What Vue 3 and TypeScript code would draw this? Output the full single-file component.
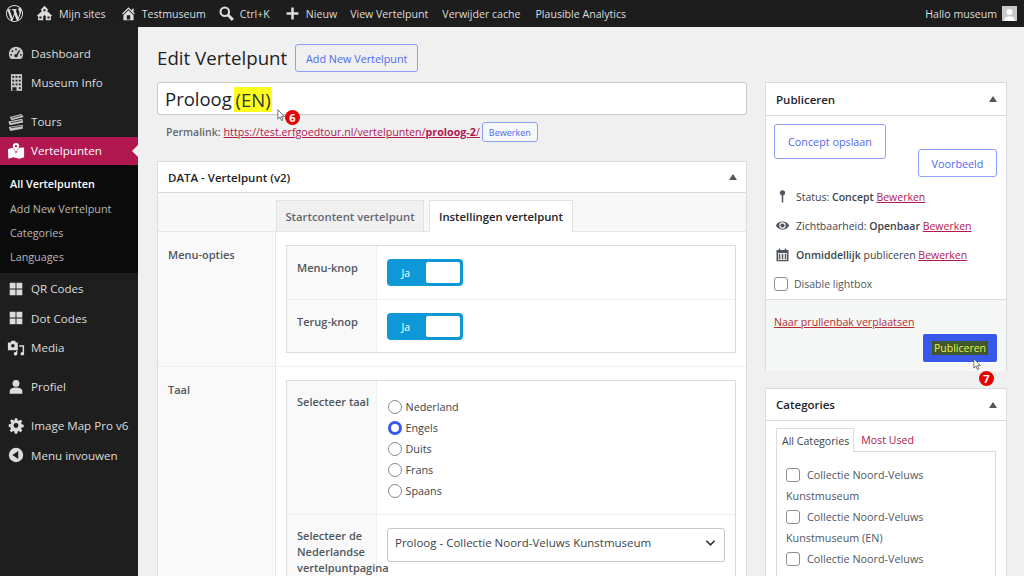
<script setup lang="ts">
const subItems = [
  { label: 'All Vertelpunten', now: true },
  { label: 'Add New Vertelpunt', now: false },
  { label: 'Categories', now: false },
  { label: 'Languages', now: false },
]
const languages = [
  { label: 'Nederland', on: false },
  { label: 'Engels', on: true },
  { label: 'Duits', on: false },
  { label: 'Frans', on: false },
  { label: 'Spaans', on: false },
]
const cats = ['Collectie Noord-Veluws', 'Collectie Noord-Veluws', 'Collectie Noord-Veluws']
const catSub = ['Kunstmuseum', 'Kunstmuseum (EN)', '']
</script>

<template>
  <div class="page">
    <header class="bar">
      <svg class="bi wp" viewBox="0 0 20 20"><path fill="#dcdcdc" d="M20 10c0-5.510-4.490-10-10-10C4.480 0 0 4.490 0 10c0 5.520 4.480 10 10 10 5.510 0 10-4.480 10-10zM7.780 15.370L4.370 6.220c.55-.02 1.170-.08 1.170-.08.5-.06.44-1.130-.06-1.110 0 0-1.450.11-2.370.11-.18 0-.37 0-.58-.01C4.120 2.690 6.880 1.120 10 1.120c2.330 0 4.450.87 6.050 2.340-.68-.11-1.650.39-1.650 1.580 0 .74.45 1.360.9 2.100.35.61.55 1.360.55 2.460 0 1.490-1.400 5-1.400 5l-3.030-8.370c.54-.02.82-.17.82-.17.5-.05.44-1.250-.06-1.220 0 0-1.440.12-2.380.12-.87 0-2.330-.12-2.330-.12-.5-.03-.56 1.200-.06 1.220l.92.08 1.260 3.410zM17.410 10c.24-.64.74-1.870.43-4.250.7 1.290 1.050 2.710 1.050 4.250 0 3.290-1.730 6.240-4.400 7.780.97-2.590 1.940-5.200 2.920-7.780zM6.100 18.090C3.120 16.640 1.110 13.530 1.110 10c0-1.300.23-2.480.72-3.590C3.250 10.300 4.670 14.200 6.100 18.090zm4.030-6.630l2.580 6.980c-.86.29-1.740.45-2.710.45-.79 0-1.570-.11-2.290-.33.81-2.380 1.620-4.740 2.420-7.100z"/></svg>
      <span class="bitem m-sites"><svg class="bi" viewBox="0 0 20 20"><path fill="#dcdcdc" fill-rule="evenodd" d="M10 1 5.500 5.500 7 7l-6 5.500.8.800.7-.6V18h6v-4.800l1.500-1.400 1.500 1.400V18h6v-5.300l.7.6.8-.8L13 7l1.500-1.500zM8.800 5h2.400v2.300H8.800zM4 13.500h2.500V16H4zm9.500 0H16V16h-2.500z"/></svg><span class="bt6">Mijn sites</span></span>
      <span class="bitem m-home"><svg class="bi" viewBox="0 0 20 20"><path fill="#dcdcdc" d="M16 8.500l1.530 1.530-1.060 1.060L10 4.620l-6.470 6.470-1.060-1.060L10 2.500l4 4v-2h2v4zm-6-2.460l6 5.990V18H4v-5.970zM12 17v-5H8v5h4z"/></svg>Testmuseum</span>
      <span class="bitem m-search"><svg class="bi" viewBox="0 0 20 20"><circle cx="8" cy="8" r="5" fill="none" stroke="#dcdcdc" stroke-width="2.500"/><path d="m11.500 11.500 6 6" stroke="#dcdcdc" stroke-width="3.400"/></svg>Ctrl+K</span>
      <span class="bitem m-plus"><svg class="bi" viewBox="0 0 20 20"><path d="M8.500 3h3v5.500H17v3h-5.500V17h-3v-5.500H3v-3h5.500z" fill="#dcdcdc"/></svg>Nieuw</span>
      <span class="bitem m-view">View Vertelpunt</span>
      <span class="bitem m-cache">Verwijder cache</span>
      <span class="bitem m-plaus">Plausible Analytics</span>
      <span class="bitem hello">Hallo museum<span class="avatar"><svg viewBox="0 0 15 15"><rect width="15" height="15" fill="#c9c9c9"/><circle cx="7.500" cy="6" r="3" fill="#fff"/><path d="M2 15c.5-4 3-4.500 5.500-4.500S12.500 11 13 15z" fill="#fff"/></svg></span></span>
    </header>

    <div class="body">
      <nav class="side">
        <a class="mi"><svg class="si" viewBox="0 0 20 20"><path d="M10 3a8 8 0 0 0-8 8c0 2.200.9 4.200 2.300 5.600h11.400A8 8 0 0 0 18 11a8 8 0 0 0-8-8z" fill="#c8c8c8"/><circle cx="6" cy="8" r="1" fill="#1e1e1e"/><circle cx="10" cy="6" r="1" fill="#1e1e1e"/><circle cx="4.500" cy="12" r="1" fill="#1e1e1e"/><circle cx="15.500" cy="12" r="1" fill="#1e1e1e"/><path d="m14 7-3 5" stroke="#1e1e1e" stroke-width="1.500"/><circle cx="10" cy="13" r="1.800" fill="#1e1e1e"/></svg>Dashboard</a>
        <a class="mi"><svg class="si tall" viewBox="0 0 14 20"><path d="M1 1h12v18H1z" fill="#c8c8c8"/><path d="M2.500 3h2v2h-2zm3.500 0h2v2H6zm3.500 0h2v2h-2zM2.500 7h2v2h-2zM6 7h2v2H6zm3.500 0h2v2h-2zM2.500 11h2v2h-2zM6 11h2v2H6zm3.500 0h2v2h-2zM2.500 15H7v4H2.500zm7 0h2v2h-2z" fill="#1e1e1e"/></svg>Museum Info</a>
        <a class="mi gap"><svg class="si" viewBox="0 0 20 20"><path d="M3 4.500 16 1l2.500 3.500L5 8zM1.500 9.500 17 6.500l1 4-15 3zM2 15.500 17.500 13v4.500L3.500 20z" fill="#c8c8c8"/><path d="m5 5.700 11-3M4 10.800l12-2.400M4.500 16.400l12-1.800" stroke="#1e1e1e" stroke-width=".8"/></svg>Tours</a>
        <a class="mi act"><svg class="si" viewBox="0 0 20 20"><path d="M1 8 6 6.500l1.500 1L10 13l2.500-5.500 1.500-1 5-.5v11l-5 1.500-7-1.500-5.500 1.500z" fill="#fff"/><path d="M10 1a3.500 3.500 0 0 0-3.500 3.500c0 2 3.500 6.500 3.500 6.500s3.500-4.500 3.500-6.500A3.500 3.500 0 0 0 10 1zm0 2.200a1.300 1.300 0 1 1 0 2.600 1.300 1.300 0 0 1 0-2.600z" fill="#fff"/></svg>Vertelpunten<i class="arrow"></i></a>
        <div class="sub">
          <a v-for="s in subItems" :key="s.label" :class="{ now: s.now }">{{ s.label }}</a>
        </div>
        <a class="mi"><svg class="si" viewBox="0 0 20 20"><path d="M3 3h6.500v6.500H3zm7.500 0H17v6.500h-6.500zM3 10.500h6.500V17H3zm7.500 0H17V17h-6.500z" fill="#dcdcdc"/></svg>QR Codes</a>
        <a class="mi"><svg class="si" viewBox="0 0 20 20"><path d="M3 3h6.500v6.500H3zm7.500 0H17v6.500h-6.500zM3 10.500h6.500V17H3zm7.500 0H17V17h-6.500z" fill="#dcdcdc"/></svg>Dot Codes</a>
        <a class="mi"><svg class="si" viewBox="0 0 20 20"><path d="M1 4h3l1-2h4l1 2h2v8.500H1z" fill="#dcdcdc"/><circle cx="6.500" cy="7.500" r="2" fill="#1e1e1e"/><path d="M13.500 7h5.500v9.500a2 2 0 1 1-1.600-2V8.700h-3.900z" fill="#dcdcdc"/><circle cx="9.500" cy="16.500" r="2" fill="#dcdcdc"/><path d="M10 16.500V13h1.500v3.500z" fill="#dcdcdc"/></svg>Media</a>
        <a class="mi gap"><svg class="si" viewBox="0 0 20 20"><circle cx="10" cy="6" r="3.800" fill="#dcdcdc"/><path d="M3 17.500v-3c0-2.500 3-4 7-4s7 1.500 7 4v3z" fill="#dcdcdc"/></svg>Profiel</a>
        <a class="mi gap"><svg class="si" viewBox="0 0 20 20"><path d="m8.500 1h3l.5 2.600 1.500.6 2.200-1.500 2.100 2.100-1.500 2.200.6 1.500 2.600.5v3l-2.600.5-.6 1.500 1.500 2.200-2.100 2.100-2.200-1.500-1.500.6-.5 2.600h-3l-.5-2.600-1.500-.6-2.200 1.500-2.100-2.100 1.500-2.200-.6-1.500L1 11.500v-3l2.600-.5.6-1.500L2.700 4.300l2.100-2.100L7 3.700l1.500-.6zM10 7a3 3 0 1 0 0 6 3 3 0 0 0 0-6z" fill="#dcdcdc" transform="translate(1 .5) scale(.9)"/></svg>Image Map Pro v6</a>
        <a class="mi"><svg class="si" viewBox="0 0 20 20"><circle cx="10" cy="10" r="8" fill="#dcdcdc"/><path d="M12.500 5.500v9L6 10z" fill="#1e1e1e"/></svg>Menu invouwen</a>
      </nav>

      <main class="main">
        <div class="head"><h1>Edit Vertelpunt</h1><a class="btn">Add New Vertelpunt</a></div>
        <div class="cols">
          <div class="left">
            <div class="title-wrap">
              <div class="title">Proloog <mark>(EN)</mark></div>
              <svg class="ptr p6" viewBox="0 0 12 18"><path d="M1 1v13l3-3 2 5 2-1-2-4.500h4z" fill="#fff" stroke="#444" stroke-width="1"/></svg>
              <span class="badge b6">6</span>
            </div>
            <div class="perma"><b>Permalink:</b> <a class="lnk">https://test.erfgoedtour.nl/vertelpunten/<strong>proloog-2</strong>/</a><span class="btn sm">Bewerken</span></div>

            <section class="box data">
              <div class="box-h"><span>DATA - Vertelpunt (v2)</span><i class="tri"></i></div>
              <div class="tabs">
                <span class="tab">Startcontent vertelpunt</span>
                <span class="tab on">Instellingen vertelpunt</span>
              </div>
              <div class="grp">
                <div class="glabel">Menu-opties</div>
                <div class="gbody">
                  <div class="inner">
                    <div class="row r1">
                      <div class="rl">Menu-knop</div>
                      <div class="rv"><span class="toggle"><span class="ja">Ja</span><span class="knob"></span></span></div>
                    </div>
                    <div class="row r1">
                      <div class="rl">Terug-knop</div>
                      <div class="rv"><span class="toggle"><span class="ja">Ja</span><span class="knob"></span></span></div>
                    </div>
                  </div>
                </div>
              </div>
              <div class="grp">
                <div class="glabel">Taal</div>
                <div class="gbody">
                  <div class="inner">
                    <div class="row r2">
                      <div class="rl">Selecteer taal</div>
                      <div class="rv radios">
                        <label v-for="l in languages" :key="l.label"><i class="radio" :class="{ on: l.on }"></i>{{ l.label }}</label>
                      </div>
                    </div>
                    <div class="row r3">
                      <div class="rl">Selecteer de Nederlandse vertelpuntpagina</div>
                      <div class="rv"><div class="select"><span>Proloog - Collectie Noord-Veluws Kunstmuseum</span><svg viewBox="0 0 12 8"><path d="m1.500 1.500 4.500 4.500 4.500-4.500" fill="none" stroke="#333" stroke-width="1.700"/></svg></div></div>
                    </div>
                  </div>
                </div>
              </div>
            </section>
          </div>

          <aside class="right">
            <section class="box pub">
              <div class="box-h"><span>Publiceren</span><i class="tri"></i></div>
              <div class="pub-btns"><a class="btn big">Concept opslaan</a><a class="btn prev">Voorbeeld</a></div>
              <div class="meta"><svg class="mic" viewBox="0 0 20 20"><circle cx="10" cy="5" r="3.500" fill="#50575e"/><path d="M9 7h2v11H9z" fill="#50575e"/></svg><span>Status: <b>Concept</b> <a class="lnk">Bewerken</a></span></div>
              <div class="meta"><svg class="mic" viewBox="0 0 20 20"><path d="M1 10c2-3.500 5-5.500 9-5.500s7 2 9 5.500c-2 3.500-5 5.500-9 5.500S3 13.500 1 10z" fill="#50575e"/><circle cx="10" cy="10" r="4.200" fill="#fff"/><circle cx="10" cy="10" r="2.800" fill="#50575e"/></svg><span>Zichtbaarheid: <b>Openbaar</b> <a class="lnk">Bewerken</a></span></div>
              <div class="meta"><svg class="mic" viewBox="0 0 20 20"><path d="M2 4h3V2h2v2h6V2h2v2h3v15H2z" fill="#50575e"/><path d="M4 8h12v9H4z" fill="#fff"/><path d="M5 9h2v7H5zm4 0h2v7H9zm4 0h2v7h-2z" fill="#50575e"/></svg><span><b>Onmiddellijk</b> publiceren <a class="lnk">Bewerken</a></span></div>
              <div class="meta chk"><i class="check"></i><span>Disable lightbox</span></div>
              <div class="pub-foot">
                <a class="trash">Naar prullenbak verplaatsen</a>
                <div class="foot-act"><span class="pub-btn"><span>Publiceren</span></span>
                  <svg class="ptr p7" viewBox="0 0 12 18"><path d="M1 1v13l3-3 2 5 2-1-2-4.500h4z" fill="#fff" stroke="#444" stroke-width="1"/></svg>
                  <span class="badge b7">7</span>
                </div>
              </div>
            </section>
            <section class="box cat">
              <div class="box-h"><span>Categories</span><i class="tri"></i></div>
              <div class="cat-body">
                <div class="cat-tabs"><span class="ct on">All Categories</span><span class="ct lnk2">Most Used</span></div>
                <div class="cat-list">
                  <template v-for="(c, i) in cats" :key="i">
                    <div class="ci"><i class="check"></i>{{ c }}</div>
                    <div v-if="catSub[i]" class="ci2">{{ catSub[i] }}</div>
                  </template>
                </div>
              </div>
            </section>
          </aside>
        </div>
      </main>
    </div>
  </div>
</template>

<style>
html, body { margin: 0; background: #f0f0f1; overflow: hidden; }
</style>

<style scoped>
* { box-sizing: border-box; }
.page { width: 1024px; height: 576px; overflow: hidden; font-family: "Open Sans", "Noto Sans", sans-serif; font-size: 11.5px; color: #3c434a; background: #f0f0f1; }
.bar { height: 27px; background: #1d1d1d; color: #dcdcdc; display: flex; align-items: center; padding-left: 6px; font-size: 10.6px; white-space: nowrap; }
.bi { width: 17px; height: 17px; flex: none; }
.bitem { display: flex; align-items: center; }
.bitem .bi { margin-right: 5px; }
.bt6 { margin-left: 1px; }
.m-sites { margin-left: 13px; }
.m-home { margin-left: 14px; }
.m-search { margin-left: 12px; }
.m-plus { margin-left: 14px; }
.m-view { margin-left: 13px; }
.m-cache { margin-left: 14px; }
.m-plaus { margin-left: 15px; }
.hello { margin-left: auto; margin-right: 7px; }
.avatar { width: 15px; height: 15px; margin-left: 5px; display: block; }
.avatar svg { display: block; }
.body { display: flex; height: 549px; }
.side { width: 138px; flex: none; background: #1e1e1e; padding-top: 11.5px; color: #dcdcdc; font-size: 11.6px; }
.mi { display: flex; align-items: center; height: 29.5px; padding-left: 7px; position: relative; white-space: nowrap; }
.gap { margin-top: 9.5px; }
.si { width: 18px; height: 18px; margin-right: 6px; flex: none; }
.act { background: #b0184f; color: #fff; height: 28.5px; }
.arrow { position: absolute; right: 0; top: 8px; border: 6px solid transparent; border-right-color: #f0f0f1; border-left: 0; }
.sub { background: #0b0b0b; padding: 6.5px 0 4px; height: 107.5px; margin-bottom: 1.5px; display: flex; flex-direction: column; font-size: 10.8px; color: #b8b8b8; }
.sub a { height: 24.4px; flex: none; padding-left: 10px; display: flex; align-items: center; white-space: nowrap; }
.sub a.now { color: #fff; font-weight: 600; }
.main { flex: 1; padding: 17px 17px 0 19px; min-width: 0; }
.head { display: flex; align-items: center; gap: 8px; height: 28px; margin-bottom: 10px; }
h1 { margin: 0; font-size: 18.7px; font-weight: 400; color: #1d2327; line-height: 28px; white-space: nowrap; }
.btn { border: 1px solid #8c9ffa; border-radius: 3px; color: #4f69f0; background: #f6f7f7; font-size: 10.8px; display: inline-flex; align-items: center; justify-content: center; white-space: nowrap; }
.head .btn { height: 28px; width: 123px; background: #f0f0f1; }
.cols { display: flex; gap: 18px; align-items: flex-start; }
.left { width: 590px; flex: none; }
.right { width: 242px; flex: none; }
.title-wrap { position: relative; }
.title { height: 33px; background: #fff; border: 1px solid #c8c8c8; border-radius: 3px; font-size: 18.5px; line-height: 31px; padding-left: 7px; color: #1d2327; white-space: nowrap; }
mark { background: #ffff1e; color: #2c3338; display: inline-block; height: 25px; line-height: 25px; vertical-align: top; margin: 4px 0 0 -3px; padding: 0 1px 0 2px; }
.badge { position: absolute; background: #e60000; color: #fff; border-radius: 50%; width: 15px; height: 15px; font-size: 11px; font-weight: 700; display: flex; align-items: center; justify-content: center; }
.b6 { left: 128px; top: 28px; }
.ptr { position: absolute; width: 9px; height: 13px; }
.p6 { left: 120px; top: 27px; }
.perma { display: flex; align-items: center; margin-top: 6px; height: 22px; padding-left: 9px; font-size: 10.5px; white-space: pre; color: #646970; }
.perma b { font-weight: 600; }
.perma .lnk { font-size: 10.7px; margin-left: 3px; }
.lnk { color: #b0184f; text-decoration: underline; }
.btn.sm { height: 20px; width: 56px; font-size: 9px; margin-left: 2px; }
.box { background: #fff; border: 1px solid #dcdcde; }
.data { margin-top: 18px; height: 600px; }
.box-h { height: 31px; display: flex; align-items: center; justify-content: space-between; padding: 0 9px 0 10px; font-weight: 600; font-size: 11.5px; color: #1d2327; border-bottom: 1px solid #dcdcde; }
.tri { width: 0; height: 0; border: 4px solid transparent; border-bottom: 6px solid #50575e; border-top: 0; }
.tabs { height: 39px; background: #f8f8f8; padding-left: 118px; display: flex; align-items: flex-end; gap: 5px; border-bottom: 1px solid #e5e5e5; }
.tab { height: 31px; width: 148px; background: #f0f0f1; border: 1px solid #e2e2e2; border-bottom: 0; font-weight: 600; font-size: 11.3px; display: flex; align-items: center; justify-content: center; color: #646970; white-space: nowrap; }
.tab.on { background: #fff; width: 144px; color: #1d2327; height: 32px; margin-bottom: -1px; }
.grp { display: flex; border-bottom: 1px solid #eee; }
.glabel { width: 118px; flex: none; background: #f9f9f9; border-right: 1px solid #e8e8e8; padding: 15px 10px; font-weight: 600; font-size: 11px; color: #50575e; }
.gbody { flex: 1; padding: 13px 10px; min-width: 0; }
.inner { border: 1px solid #dcdcde; }
.row { display: flex; }
.row + .row { border-top: 1px solid #eee; }
.r1 { height: 53px; }
.r2 { height: 133px; }
.r3 { height: 80px; }
.rl { width: 90px; flex: none; background: #f9f9f9; border-right: 1px solid #eee; padding: 14px 0 14px 10px; font-weight: 600; font-size: 11px; line-height: 16px; color: #50575e; }
.r2 .rl { padding-top: 13px; }
.r3 .rl { padding-top: 13px; }
.rv { flex: 1; padding: 13px 10px; min-width: 0; }
.toggle { width: 76px; height: 27px; background: #0f98d8; border-radius: 4px; display: flex; align-items: center; padding: 3px; }
.ja { width: 33px; color: #fff; font-size: 10.5px; text-align: center; }
.knob { background: #fff; width: 36px; height: 21px; margin-left: 4px; border-radius: 2px; }
.radios { padding: 15px 11px 0; display: flex; flex-direction: column; }
.radios label { display: flex; align-items: center; height: 21px; font-size: 10.8px; gap: 3.5px; }
.radio { width: 14px; height: 14px; border: 1px solid #7e8993; border-radius: 50%; background: #fff; }
.radio.on { border: 3.5px solid #3858e9; }
.select { height: 34px; border: 1px solid #c8c8c8; border-radius: 3px; display: flex; justify-content: space-between; align-items: center; padding: 0 8px 0 7px; font-size: 11.5px; color: #3c434a; white-space: nowrap; }
.select span { padding-bottom: 6px; }
.r3 .rv { padding-top: 13px; }
.select svg { width: 11px; height: 8px; margin-bottom: 5px; }
.pub { height: 289px; }
.pub .box-h { height: 33px; }
.pub-btns { display: flex; justify-content: space-between; padding: 8px 9px 0 8px; height: 66px; }
.btn.big { width: 112px; height: 35px; background: #fff; }
.btn.prev { width: 79px; height: 28px; margin-top: 25px; background: #fff; }
.meta { height: 29.2px; padding-left: 9px; display: flex; align-items: center; white-space: pre; font-size: 10.5px; }
.meta b { font-weight: 600; }
.mic { width: 15px; height: 15px; margin-right: 6px; flex: none; }
.check { display: block; width: 14px; height: 14px; border: 1px solid #8c8f94; border-radius: 3px; background: #fff; flex: none; }
.chk { gap: 6px; color: #50575e; padding-left: 8px; }
.pub-foot { background: #f6f7f7; border-top: 1px solid #dcdcde; height: 72px; padding: 15px 9px 0 8px; }
.trash { color: #b32d2e; text-decoration: underline; font-size: 10.6px; display: block; line-height: 14px; }
.foot-act { display: flex; justify-content: flex-end; position: relative; margin-top: 5px; }
.pub-btn { width: 74px; height: 28px; background: #3858e9; border-radius: 2px; display: flex; align-items: center; justify-content: center; }
.pub-btn span { background: #3e5a2c; color: #ebf04a; font-size: 10.5px; padding: 0 2px; line-height: 14px; }
.p7 { right: 15px; top: 24px; }
.b7 { right: 3px; top: 37px; }
.cat { margin-top: 17px; height: 260px; }
.cat .box-h { height: 32px; }
.cat-body { padding: 7px 10px 8px; }
.cat-tabs { display: flex; height: 23px; }
.ct { padding: 0 4px 0 5px; display: flex; align-items: center; font-size: 10.6px; }
.ct.on { border: 1px solid #dcdcde; border-bottom: 0; background: #fff; height: 24px; position: relative; z-index: 1; }
.lnk2 { color: #b0184f; margin-left: 2px; }
.cat-list { border: 1px solid #dcdcde; padding: 12px 9px; height: 200px; font-size: 10.8px; color: #50575e; }
.ci { display: flex; align-items: center; gap: 7px; height: 21px; white-space: nowrap; }
.ci2 { height: 21px; display: flex; align-items: center; }
.tall { width: 13px; height: 19px; margin: 0 8px 0 3px; }
</style>
